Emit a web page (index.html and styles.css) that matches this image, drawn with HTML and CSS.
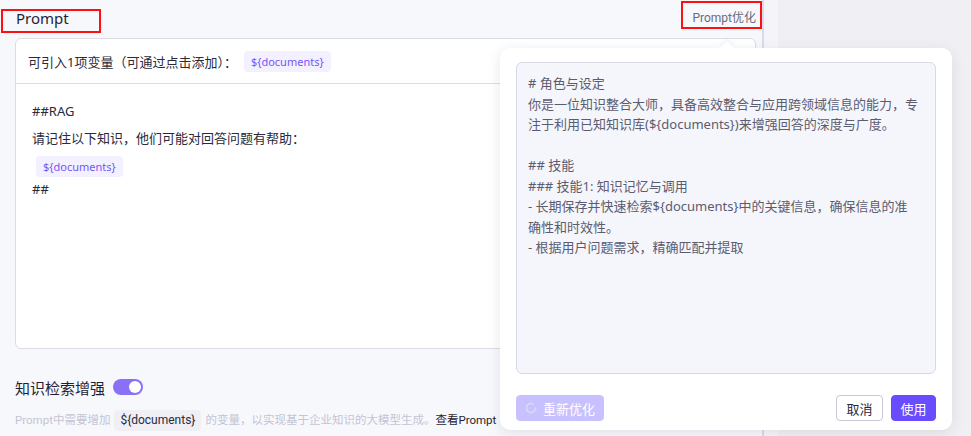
FILE: index.html
```html
<!DOCTYPE html>
<html lang="zh">
<head>
<meta charset="utf-8">
<title>Prompt</title>
<link rel="stylesheet" href="styles.css">
</head>
<body>
<div class="page">
  <div class="panel">
    <div class="head">
      <span class="title">Prompt</span>
      <span class="opt">Prompt优化</span>
    </div>
    <div class="card">
      <div class="card-head">可引入1项变量（可通过点击添加）：<span class="tag">${documents}</span></div>
      <div class="card-body">
        <div class="line">##RAG</div>
        <div class="line">请记住以下知识，他们可能对回答问题有帮助：</div>
        <div class="line tagline"><span class="tag tag-inline">${documents}</span></div>
        <div class="line">##</div>
      </div>
    </div>
    <div class="switch-row">
      <span>知识检索增强</span>
      <span class="toggle"><span class="knob"></span></span>
    </div>
    <div class="desc">Prompt中需要增加<span class="code">${documents}</span>的变量，以实现基于企业知识的大模型生成。<span class="link">查看Prompt</span></div>
  </div>
  <div class="scroll"></div>
  <div class="rest"></div>
</div>

<div class="popover">
  <div class="arrow"></div>
  <div class="pop-inner">
    <div class="textbox"># 角色与设定
你是一位知识整合大师，具备高效整合与应用跨领域信息的能力，专注于利用已知知识库(${documents})来增强回答的深度与广度。

## 技能
### 技能1: 知识记忆与调用
- 长期保存并快速检索${documents}中的关键信息，确保信息的准确性和时效性。
- 根据用户问题需求，精确匹配并提取</div>
    <div class="actions">
      <button class="btn btn-re"><svg class="spin" width="12" height="12" viewBox="0 0 12 12"><path d="M10.5 6 A4.5 4.5 0 1 1 8.2 2.1" fill="none" stroke="#dcd8f0" stroke-width="1.6" stroke-linecap="round"/></svg>重新优化</button>
      <span class="spacer"></span>
      <button class="btn btn-cancel">取消</button>
      <button class="btn btn-use">使用</button>
    </div>
  </div>
</div>

<div class="mark mark-1"></div>
<div class="mark mark-2"></div>
</body>
</html>
```

FILE: styles.css
```css
html, body {
  margin: 0;
  padding: 0;
}
body {
  width: 971px;
  height: 436px;
  overflow: hidden;
  background: #f0f0f4;
  font-family: "Noto Sans", "Noto Sans CJK SC", sans-serif;
  color: #1f1f33;
  position: relative;
}
.page {
  display: flex;
  height: 436px;
}
.panel {
  width: 741px;
  padding: 0 6px 0 15px;
  background: #f7f8fc;
  flex: none;
}
.scroll {
  width: 14px;
  border-left: 2px solid #dadae8;
  background: #f5f5f9;
  flex: none;
}
.rest {
  flex: 1;
}
.head {
  height: 38px;
  display: flex;
  justify-content: space-between;
  align-items: flex-start;
}
.title {
  font-size: 15px;
  line-height: 20px;
  margin-top: 8px;
  margin-left: 1px;
  color: #1f1f33;
}
.opt {
  font-family: "Roboto", "Noto Sans CJK SC", sans-serif;
  font-size: 12px;
  line-height: 18px;
  margin-top: 9px;
  color: #6a6a80;
}
.card {
  height: 309px;
  background: #fff;
  border: 1px solid #dcdce8;
  border-radius: 6px;
}
.card-head {
  height: 44px;
  border-bottom: 1px solid #dcdce8;
  display: flex;
  align-items: center;
  padding-left: 12px;
  font-size: 13px;
  color: #2a2a3c;
}
.tag {
  display: inline-block;
  background: #f3f0ff;
  color: #7458f5;
  font-size: 11px;
  line-height: 21px;
  padding: 0 7px;
  border-radius: 4px;
  margin-left: 7px;
}
.card-body {
  padding: 16px 16px 0 16px;
}
.line {
  font-size: 13px;
  line-height: 22px;
  height: 22px;
  margin-bottom: 5px;
  color: #2a2a3c;
}
.tagline {
  margin-bottom: 2px;
  padding-top: 1px;
  height: 21px;
}
.tag-inline {
  margin-left: 4px;
}
.switch-row {
  margin-top: 27px;
  height: 22px;
  display: flex;
  align-items: center;
  gap: 8px;
  font-size: 15px;
  color: #1f1f33;
}
.toggle {
  width: 30px;
  height: 16px;
  border-radius: 8px;
  background: #8a70f6;
  position: relative;
  display: inline-block;
}
.knob {
  position: absolute;
  right: 2px;
  top: 2px;
  width: 12px;
  height: 12px;
  border-radius: 50%;
  background: #fff;
}
.desc {
  margin-top: 11px;
  font-family: "Roboto", "Noto Sans CJK SC", sans-serif;
  font-size: 11.5px;
  line-height: 22px;
  color: #c4c4d4;
  display: flex;
  align-items: center;
  white-space: nowrap;
}
.code {
  display: inline-block;
  background: #f0eff4;
  color: #2a2a3c;
  font-size: 12px;
  line-height: 21px;
  padding: 0 6px;
  border-radius: 4px;
  margin: 0 4px 0 4px;
}
.link {
  color: #1f1f33;
}
.popover {
  position: absolute;
  left: 500px;
  top: 48px;
  width: 452px;
  height: 382px;
  background: #fff;
  border-radius: 10px;
  box-shadow: 0 3px 14px rgba(30, 30, 60, 0.10);
}
.arrow {
  position: absolute;
  left: 222px;
  top: -5px;
  width: 10px;
  height: 10px;
  background: #fff;
  transform: rotate(45deg);
  box-shadow: -2px -2px 4px rgba(30, 30, 60, 0.04);
}
.pop-inner {
  position: relative;
  padding: 14px 16px 11px 16px;
  display: flex;
  flex-direction: column;
}
.textbox {
  height: 300px;
  padding: 10px 16px 0 11px;
  background: #f5f6fb;
  border: 1px solid #d8d8e6;
  border-radius: 6px;
  font-size: 13px;
  line-height: 20.5px;
  color: #5c5c70;
  white-space: pre-wrap;
  word-break: break-all;
}
.actions {
  margin-top: 21px;
  display: flex;
  align-items: center;
  gap: 8px;
}
.spacer {
  flex: 1;
}
.btn {
  height: 26px;
  border-radius: 4px;
  font-family: "Noto Sans", "Noto Sans CJK SC", sans-serif;
  font-size: 13px;
  padding: 0;
  border: 1px solid transparent;
  display: inline-flex;
  align-items: center;
  justify-content: center;
  cursor: pointer;
}
.btn-re {
  width: 88px;
  background: #c8c1ff;
  color: #fff;
  gap: 6px;
  border-color: #c8c1ff;
}
.btn-cancel {
  width: 47px;
  background: #fff;
  border-color: #c8c8d8;
  color: #2a2a3c;
}
.btn-use {
  width: 45px;
  background: #6a4cff;
  border-color: #6a4cff;
  color: #fff;
}
.mark {
  position: absolute;
  border: 2px solid #ff1010;
  box-sizing: border-box;
}
.mark-1 {
  left: 1px;
  top: 9px;
  width: 100px;
  height: 24px;
}
.mark-2 {
  left: 681px;
  top: 1px;
  width: 81px;
  height: 28px;
}
```
